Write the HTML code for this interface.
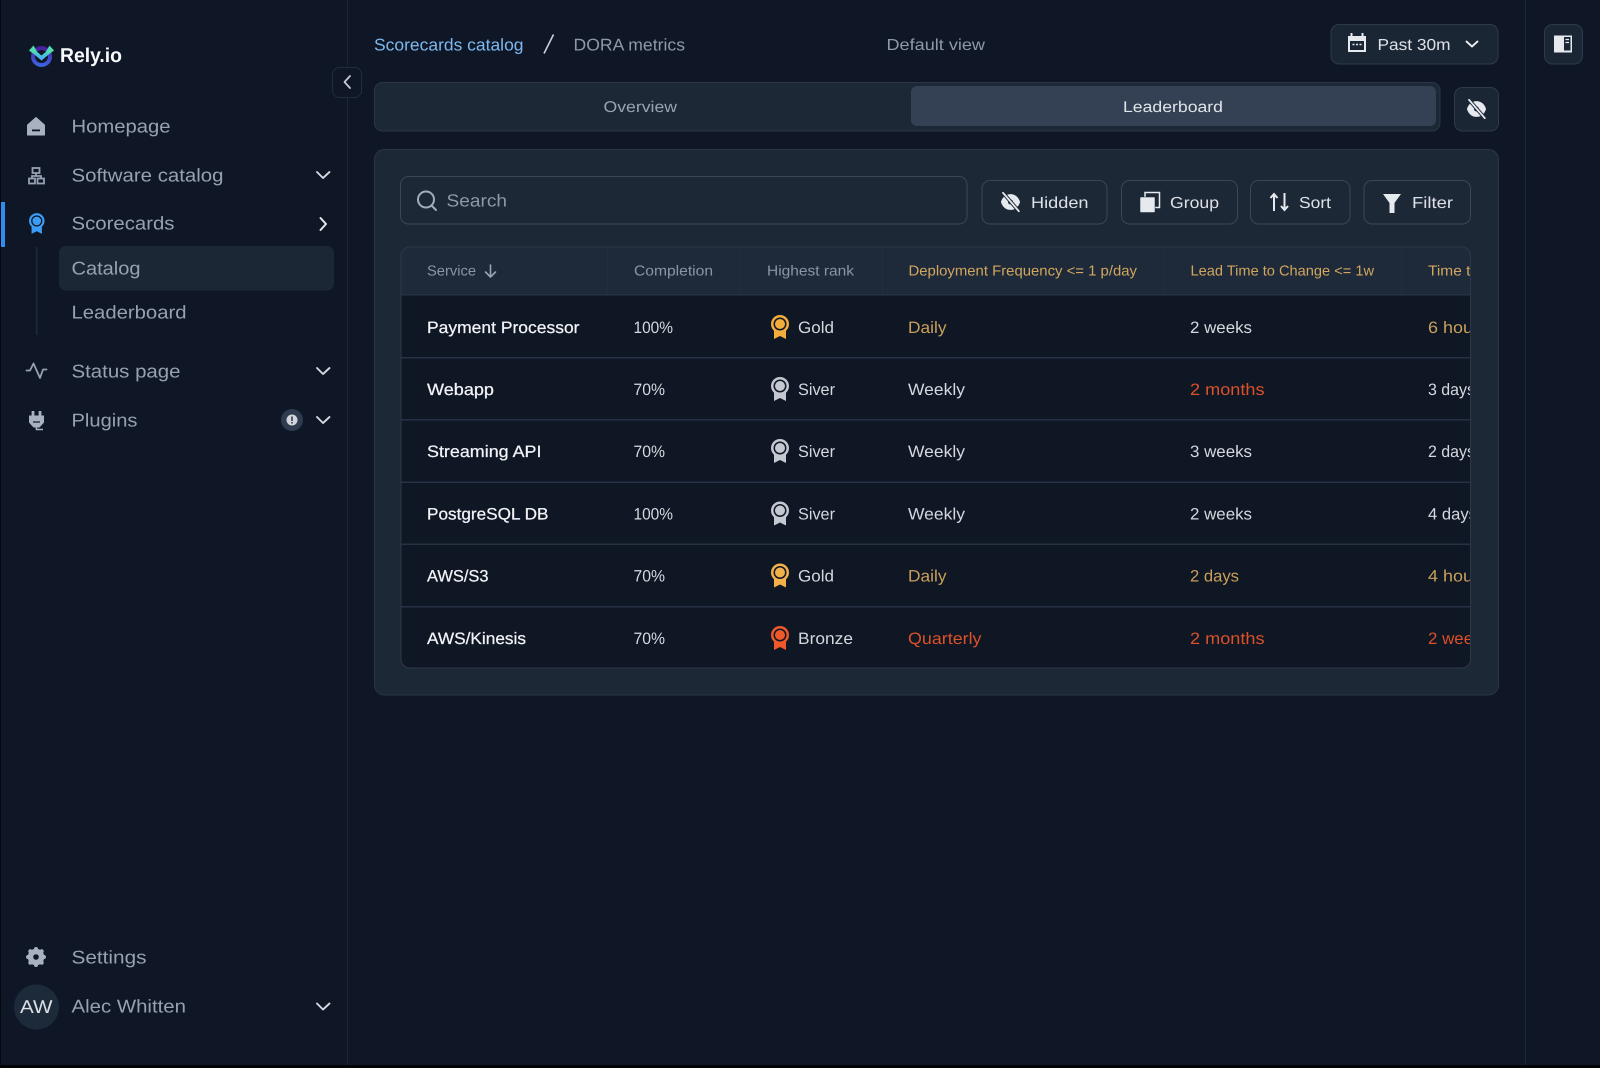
<!DOCTYPE html>
<html lang="en">
<head>
<meta charset="utf-8">
<title>Rely.io - DORA metrics</title>
<style>
html,body{margin:0;padding:0;background:#0f1727;width:1600px;height:1068px;overflow:hidden}
svg{display:block;position:absolute;left:0;top:0}
text{font-family:"Liberation Sans",sans-serif;text-rendering:geometricPrecision}
.nav{font-size:18.5px;fill:#97a1b1}
.row{font-size:16.5px;fill:#d5d9df}
.name{font-size:16.5px;fill:#f1f3f6;stroke:#f1f3f6;stroke-width:.25}
.hd{font-size:14.5px;fill:#8a95a5}
.hy{font-size:14.5px;fill:#d2a65e}
.btn{font-size:16px;fill:#dde1e7}
.y{fill:#c9a05a}
.r{fill:#db5128}
</style>
</head>
<body>
<svg width="1600" height="1068" viewBox="0 0 1600 1068" xmlns="http://www.w3.org/2000/svg">
<defs>
<linearGradient id="ring" x1="0" y1="0" x2="0" y2="1"><stop offset="0" stop-color="#4a1fa0"/><stop offset="1" stop-color="#3d63e0"/></linearGradient>
<linearGradient id="chk" x1="0" y1="0" x2="0" y2="1"><stop offset="0" stop-color="#4fdcae"/><stop offset="1" stop-color="#46b4f0"/></linearGradient>
<clipPath id="tbl"><rect x="401" y="247" width="1069.500" height="421" rx="9"/></clipPath>
<symbol id="medal" viewBox="0 0 18 24" overflow="visible">
<path d="M3 14V24L9 21L15 24V14Z" fill="currentColor"/>
<circle cx="9" cy="9" r="9" fill="currentColor"/>
<circle cx="9" cy="9" r="6.500" fill="#0f1624"/>
<circle cx="9" cy="9" r="5" fill="currentColor"/>
</symbol>
<symbol id="eyeoff" viewBox="0 0 24 24" overflow="visible">
<path d="M0.500 12C2.500 5.500 7 2.500 12 2.500S21.500 5.500 23.500 12C21.500 18.500 17 21.500 12 21.500S2.500 18.500 0.500 12Z" fill="#e6e9ee"/>
<circle cx="12" cy="12" r="3" fill="#1d2837"/>
<path d="M3 1L22 23" stroke="#1d2837" stroke-width="4.400"/>
<path d="M3 1L22 23" stroke="#e6e9ee" stroke-width="2.200" stroke-linecap="round"/>
</symbol>
</defs>

<rect width="1600" height="1068" fill="#0f1727"/>
<rect x="0" y="0" width="1" height="1068" fill="#05080f"/>
<rect x="0" y="1065" width="1600" height="3" fill="#020304"/>
<rect x="347" y="0" width="1" height="1065" fill="#1c2636"/>
<rect x="1525" y="0" width="1" height="1065" fill="#1c2636"/>

<!-- Logo -->
<circle cx="41.500" cy="56.500" r="8.500" fill="none" stroke="url(#ring)" stroke-width="4"/>
<path d="M32.500 50.500L41.500 58L50.500 50.500" fill="none" stroke="url(#chk)" stroke-width="3.800"/>
<path d="M29 50.500L33.500 45.500L37 51.500L33 53.500ZM54 50.500L49.500 45.500L46 51.500L50 53.500Z" fill="#4fdcae"/>
<text x="60" y="62" font-size="20" font-weight="700" fill="#f7f8fa" textLength="62" lengthAdjust="spacingAndGlyphs">Rely.io</text>

<!-- Collapse -->
<rect x="332.500" y="67.500" width="29" height="30" rx="7" fill="#0f1727" stroke="#212d3d"/>
<path d="M350 76L344.500 82L350 88" fill="none" stroke="#c4cad3" stroke-width="1.800" stroke-linecap="round" stroke-linejoin="round"/>

<!-- Sidebar nav -->
<path d="M27.500 125L36 117.500L44.500 125V135H27.500Z" fill="#a8b1bf" stroke="#a8b1bf" stroke-linejoin="round"/>
<rect x="32" y="129.500" width="8" height="1.800" fill="#0f1727"/>
<text class="nav" x="71.500" y="132.700" textLength="99" lengthAdjust="spacingAndGlyphs">Homepage</text>

<g fill="none" stroke="#97a1b1" stroke-width="1.800">
<rect x="32.500" y="168" width="7" height="5"/><rect x="29" y="178.500" width="6" height="5"/><rect x="37.500" y="178.500" width="6.500" height="5"/>
<path d="M36 173V176H32V178.500M36 176H41V178.500"/>
</g>
<text class="nav" x="71.500" y="181.700" textLength="152" lengthAdjust="spacingAndGlyphs">Software catalog</text>
<path d="M317 172L323 178L329.500 172" fill="none" stroke="#d4d8de" stroke-width="1.900" stroke-linecap="round" stroke-linejoin="round"/>

<rect x="1" y="202" width="4" height="45" fill="#2f8cf0"/>
<use href="#medal" x="29" y="213" width="15.500" height="21" color="#3b9cf5"/>
<text class="nav" x="71.500" y="229.700" textLength="103" lengthAdjust="spacingAndGlyphs">Scorecards</text>
<path d="M320.500 218L326 224L320.500 230" fill="none" stroke="#e5e8ec" stroke-width="2" stroke-linecap="round" stroke-linejoin="round"/>

<rect x="36" y="247" width="1.500" height="88" fill="#1e2a3a"/>
<rect x="59" y="246" width="275" height="44.500" rx="7" fill="#1c2736"/>
<text class="nav" x="71.500" y="274.700" textLength="69" lengthAdjust="spacingAndGlyphs">Catalog</text>
<text class="nav" x="71.500" y="318.700" textLength="115" lengthAdjust="spacingAndGlyphs">Leaderboard</text>

<path d="M26.500 370.500H30L33.500 363.500L40 378L43 369.500H46.500" fill="none" stroke="#97a1b1" stroke-width="1.800" stroke-linejoin="round" stroke-linecap="round"/>
<text class="nav" x="71.500" y="377.500" textLength="109" lengthAdjust="spacingAndGlyphs">Status page</text>
<path d="M317 368L323 374L329.500 368" fill="none" stroke="#d4d8de" stroke-width="1.900" stroke-linecap="round" stroke-linejoin="round"/>

<path d="M33 411V416M40 411V416" stroke="#a8b1bf" stroke-width="2.800"/>
<path d="M29 415.500H44V422.500L39.500 427.500H33.500L29 422.500Z" fill="#a8b1bf"/>
<path d="M36.500 427V429.500H43" fill="none" stroke="#a8b1bf" stroke-width="1.600"/>
<path d="M33 422h7" stroke="#0f1727" stroke-width="1.200"/>
<text class="nav" x="71.500" y="426.500" textLength="66" lengthAdjust="spacingAndGlyphs">Plugins</text>
<circle cx="292" cy="420" r="11" fill="#2f3b4e"/>
<circle cx="292" cy="420" r="5.500" fill="#d2d6dc"/>
<rect x="291.200" y="416.500" width="1.600" height="4.500" fill="#2f3b4e"/><rect x="291.200" y="422" width="1.600" height="1.500" fill="#2f3b4e"/>
<path d="M317 417L323 423L329.500 417" fill="none" stroke="#d4d8de" stroke-width="1.900" stroke-linecap="round" stroke-linejoin="round"/>

<!-- Settings -->
<g fill="#a8b1bf">
<circle cx="36" cy="957" r="8.300"/>
<circle cx="36" cy="949" r="2"/><circle cx="36" cy="965" r="2"/><circle cx="28" cy="957" r="2"/><circle cx="44" cy="957" r="2"/>
<circle cx="30.300" cy="951.300" r="2"/><circle cx="41.700" cy="951.300" r="2"/><circle cx="30.300" cy="962.700" r="2"/><circle cx="41.700" cy="962.700" r="2"/>
</g>
<circle cx="36" cy="957" r="2.800" fill="#0f1727"/>
<text class="nav" x="71.500" y="963.700" textLength="75" lengthAdjust="spacingAndGlyphs">Settings</text>

<circle cx="36.500" cy="1007" r="22.500" fill="#1d2a3a"/>
<text x="20" y="1013" font-size="18.500" fill="#dde1e6" textLength="32.500" lengthAdjust="spacingAndGlyphs">AW</text>
<text class="nav" x="71.500" y="1012.700" textLength="114.500" lengthAdjust="spacingAndGlyphs">Alec Whitten</text>
<path d="M317 1003.500L323 1009.500L329.500 1003.500" fill="none" stroke="#d4d8de" stroke-width="1.900" stroke-linecap="round" stroke-linejoin="round"/>

<!-- Breadcrumb -->
<text x="374" y="50.500" font-size="17" fill="#7db8ee" textLength="149.500" lengthAdjust="spacingAndGlyphs">Scorecards catalog</text>
<path d="M544 53.500L553.500 34.500" stroke="#c9ced6" stroke-width="1.600"/>
<text x="573.500" y="50.500" font-size="17" fill="#8e98a8" textLength="111.500" lengthAdjust="spacingAndGlyphs">DORA metrics</text>
<text x="886.500" y="50" font-size="16" fill="#8e98a8" textLength="98.500" lengthAdjust="spacingAndGlyphs">Default view</text>

<!-- Past 30m -->
<rect x="1331" y="24.500" width="167" height="39.500" rx="8" fill="#1b2635" stroke="#2e3a4b"/>
<rect x="1348" y="36" width="18" height="16" fill="#e6e9ee"/>
<path d="M1351.500 33V37M1362.500 33V37" stroke="#e6e9ee" stroke-width="2"/>
<rect x="1350" y="41" width="14" height="9" fill="#1b2635"/>
<path d="M1352.500 44.500h2M1356 44.500h2M1359.500 44.500h2" stroke="#e6e9ee" stroke-width="1.400"/>
<text class="btn" x="1377.500" y="50" textLength="73" lengthAdjust="spacingAndGlyphs">Past 30m</text>
<path d="M1466.500 41.500L1472 46.500L1477.500 41.500" fill="none" stroke="#e6e9ee" stroke-width="1.900" stroke-linecap="round" stroke-linejoin="round"/>

<!-- Panel toggle -->
<rect x="1544.500" y="24.500" width="38" height="39.500" rx="8" fill="#1b2635" stroke="#2e3a4b"/>
<rect x="1554" y="35.500" width="18" height="17" fill="#e6e9ee"/>
<rect x="1564" y="37" width="6.500" height="13.500" fill="#1b2635"/>
<path d="M1565.500 39.500h3.500M1565.500 42.500h3.500" stroke="#e6e9ee" stroke-width="1.300"/>

<!-- Tabs -->
<rect x="374.500" y="82.500" width="1065.500" height="48.500" rx="8" fill="#1d2837" stroke="#2a3646"/>
<rect x="911" y="86" width="525" height="40" rx="6" fill="#344154"/>
<text x="603.500" y="112" font-size="15.500" fill="#99a3b1" textLength="73.500" lengthAdjust="spacingAndGlyphs">Overview</text>
<text x="1123" y="112" font-size="15.500" fill="#dfe3e8" textLength="100" lengthAdjust="spacingAndGlyphs">Leaderboard</text>
<rect x="1454.500" y="87.500" width="44" height="43.500" rx="8" fill="#1b2635" stroke="#2e3a4b"/>
<use href="#eyeoff" x="1466" y="99" width="21" height="20"/>

<!-- Panel -->
<rect x="374.500" y="149.500" width="1124" height="545.500" rx="10" fill="#1d2837" stroke="#2a3646"/>
<rect x="400.500" y="176.500" width="566.500" height="47.500" rx="8" fill="#1d2837" stroke="#3a4657"/>
<circle cx="426" cy="199.500" r="8" fill="none" stroke="#a3acb9" stroke-width="2"/>
<path d="M431.500 205.500L436 210" stroke="#a3acb9" stroke-width="2" stroke-linecap="round"/>
<text x="446.500" y="206.500" font-size="17.500" fill="#8e98a8" textLength="60.500" lengthAdjust="spacingAndGlyphs">Search</text>

<g fill="#1d2837" stroke="#3a4657">
<rect x="982" y="180.500" width="125" height="43.500" rx="8"/>
<rect x="1121.500" y="180.500" width="116" height="43.500" rx="8"/>
<rect x="1250.500" y="180.500" width="99.500" height="43.500" rx="8"/>
<rect x="1364" y="180.500" width="106.500" height="43.500" rx="8"/>
</g>
<use href="#eyeoff" x="1000" y="192" width="21" height="20"/>
<text class="btn" x="1031" y="208" textLength="57.500" lengthAdjust="spacingAndGlyphs">Hidden</text>
<rect x="1145" y="192.500" width="14.500" height="15" fill="none" stroke="#e6e9ee" stroke-width="1.500"/>
<rect x="1140" y="197" width="15" height="15.500" rx="1" fill="#e6e9ee" stroke="#1d2837" stroke-width=".5"/>
<text class="btn" x="1170" y="208" textLength="49" lengthAdjust="spacingAndGlyphs">Group</text>
<path d="M1274 211V194.500M1270.500 198L1274 194L1277.500 198" fill="none" stroke="#e6e9ee" stroke-width="2"/>
<path d="M1284.500 193V209.500M1281 206L1284.500 210L1288 206" fill="none" stroke="#e6e9ee" stroke-width="2"/>
<text class="btn" x="1299" y="208" textLength="32" lengthAdjust="spacingAndGlyphs">Sort</text>
<path d="M1383 194H1401L1394.500 203V213H1389.500V203Z" fill="#e6e9ee"/>
<text class="btn" x="1412" y="208" textLength="41" lengthAdjust="spacingAndGlyphs">Filter</text>

<!-- Table -->
<g clip-path="url(#tbl)">
<rect x="401" y="247" width="1070" height="48" fill="#1e2a3a"/>
<rect x="401" y="295" width="1070" height="373" fill="#0f1624"/>
<g fill="#222e3f">
<rect x="607" y="247" width="1" height="48"/><rect x="740" y="247" width="1" height="48"/><rect x="882" y="247" width="1" height="48"/><rect x="1164" y="247" width="1" height="48"/><rect x="1401" y="247" width="1" height="48"/>
</g>
<g fill="#263243">
<rect x="401" y="294" width="1070" height="1.500"/>
<rect x="401" y="357" width="1070" height="1.500"/>
<rect x="401" y="419" width="1070" height="1.500"/>
<rect x="401" y="481.500" width="1070" height="1.500"/>
<rect x="401" y="543.500" width="1070" height="1.500"/>
<rect x="401" y="606" width="1070" height="1.500"/>
</g>
<text class="hd" x="427" y="275.700" textLength="49" lengthAdjust="spacingAndGlyphs">Service</text>
<path d="M490.500 265V276.500M485.500 272L490.500 277L495.500 272" fill="none" stroke="#99a3b1" stroke-width="1.600" stroke-linecap="round" stroke-linejoin="round"/>
<text class="hd" x="634" y="275.700" textLength="79" lengthAdjust="spacingAndGlyphs">Completion</text>
<text class="hd" x="767" y="275.700" textLength="87" lengthAdjust="spacingAndGlyphs">Highest rank</text>
<text class="hy" x="908.500" y="275.700" textLength="228.500" lengthAdjust="spacingAndGlyphs">Deployment Frequency &lt;= 1 p/day</text>
<text class="hy" x="1190.500" y="275.700" textLength="183.500" lengthAdjust="spacingAndGlyphs">Lead Time to Change &lt;= 1w</text>
<text class="hy" x="1428" y="275.700" textLength="51" lengthAdjust="spacingAndGlyphs">Time to</text>

<!-- Row 1 -->
<text class="name" x="427" y="333" textLength="152.500" lengthAdjust="spacingAndGlyphs">Payment Processor</text>
<text class="row" x="633.500" y="333" textLength="39.500" lengthAdjust="spacingAndGlyphs">100%</text>
<use href="#medal" x="771" y="315" width="18" height="24" color="#f2ad3d"/>
<text class="row" x="798" y="333" textLength="36" lengthAdjust="spacingAndGlyphs">Gold</text>
<text class="row y" x="908" y="333" textLength="38.500" lengthAdjust="spacingAndGlyphs">Daily</text>
<text class="row" x="1190" y="333" textLength="62" lengthAdjust="spacingAndGlyphs">2 weeks</text>
<text class="row y" x="1428" y="333" textLength="60" lengthAdjust="spacingAndGlyphs">6 hours</text>

<!-- Row 2 -->
<text class="name" x="427" y="395" textLength="67" lengthAdjust="spacingAndGlyphs">Webapp</text>
<text class="row" x="633.500" y="395" textLength="31.500" lengthAdjust="spacingAndGlyphs">70%</text>
<use href="#medal" x="771" y="377" width="18" height="24" color="#c3c8d1"/>
<text class="row" x="798" y="395" textLength="37" lengthAdjust="spacingAndGlyphs">Siver</text>
<text class="row" x="908" y="395" textLength="57" lengthAdjust="spacingAndGlyphs">Weekly</text>
<text class="row r" x="1190" y="395" textLength="74.500" lengthAdjust="spacingAndGlyphs">2 months</text>
<text class="row" x="1428" y="395" textLength="47" lengthAdjust="spacingAndGlyphs">3 days</text>

<!-- Row 3 -->
<text class="name" x="427" y="457" textLength="114.500" lengthAdjust="spacingAndGlyphs">Streaming API</text>
<text class="row" x="633.500" y="457" textLength="31.500" lengthAdjust="spacingAndGlyphs">70%</text>
<use href="#medal" x="771" y="439" width="18" height="24" color="#c3c8d1"/>
<text class="row" x="798" y="457" textLength="37" lengthAdjust="spacingAndGlyphs">Siver</text>
<text class="row" x="908" y="457" textLength="57" lengthAdjust="spacingAndGlyphs">Weekly</text>
<text class="row" x="1190" y="457" textLength="62" lengthAdjust="spacingAndGlyphs">3 weeks</text>
<text class="row" x="1428" y="457" textLength="47" lengthAdjust="spacingAndGlyphs">2 days</text>

<!-- Row 4 -->
<text class="name" x="427" y="519.500" textLength="121.500" lengthAdjust="spacingAndGlyphs">PostgreSQL DB</text>
<text class="row" x="633.500" y="519.500" textLength="39.500" lengthAdjust="spacingAndGlyphs">100%</text>
<use href="#medal" x="771" y="501.500" width="18" height="24" color="#c3c8d1"/>
<text class="row" x="798" y="519.500" textLength="37" lengthAdjust="spacingAndGlyphs">Siver</text>
<text class="row" x="908" y="519.500" textLength="57" lengthAdjust="spacingAndGlyphs">Weekly</text>
<text class="row" x="1190" y="519.500" textLength="62" lengthAdjust="spacingAndGlyphs">2 weeks</text>
<text class="row" x="1428" y="519.500" textLength="49" lengthAdjust="spacingAndGlyphs">4 days</text>

<!-- Row 5 -->
<text class="name" x="427" y="581.500" textLength="61.500" lengthAdjust="spacingAndGlyphs">AWS/S3</text>
<text class="row" x="633.500" y="581.500" textLength="31.500" lengthAdjust="spacingAndGlyphs">70%</text>
<use href="#medal" x="771" y="563.500" width="18" height="24" color="#f2b14a"/>
<text class="row" x="798" y="581.500" textLength="36" lengthAdjust="spacingAndGlyphs">Gold</text>
<text class="row y" x="908" y="581.500" textLength="38.500" lengthAdjust="spacingAndGlyphs">Daily</text>
<text class="row y" x="1190" y="581.500" textLength="49" lengthAdjust="spacingAndGlyphs">2 days</text>
<text class="row y" x="1428" y="581.500" textLength="60" lengthAdjust="spacingAndGlyphs">4 hours</text>

<!-- Row 6 -->
<text class="name" x="427" y="644" textLength="99" lengthAdjust="spacingAndGlyphs">AWS/Kinesis</text>
<text class="row" x="633.500" y="644" textLength="31.500" lengthAdjust="spacingAndGlyphs">70%</text>
<use href="#medal" x="771" y="626" width="18" height="24" color="#f0592a"/>
<text class="row" x="798" y="644" textLength="55" lengthAdjust="spacingAndGlyphs">Bronze</text>
<text class="row r" x="908" y="644" textLength="73.500" lengthAdjust="spacingAndGlyphs">Quarterly</text>
<text class="row r" x="1190" y="644" textLength="74.500" lengthAdjust="spacingAndGlyphs">2 months</text>
<text class="row r" x="1428" y="644" textLength="62" lengthAdjust="spacingAndGlyphs">2 weeks</text>
</g>
<rect x="401" y="247" width="1069.500" height="421" rx="9" fill="none" stroke="#2c3848"/>
</svg>
</body>
</html>
